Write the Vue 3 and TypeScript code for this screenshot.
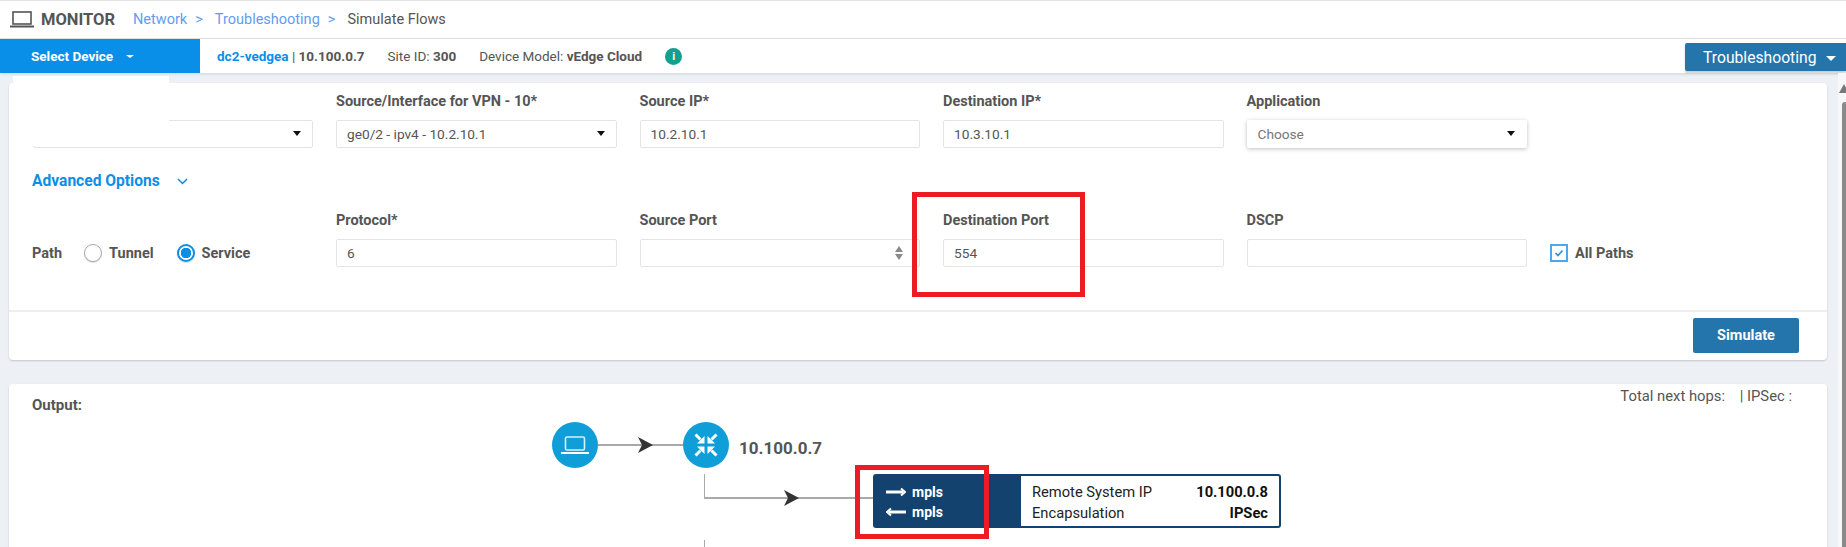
<script setup lang="ts">
const crumbs = ['Network', 'Troubleshooting']
</script>

<template>
  <div class="page">
    <header class="topbar">
      <svg class="monitor-icon" viewBox="0 0 24 17" aria-hidden="true">
        <rect x="3" y="1" width="18" height="12" fill="none" stroke="#555" stroke-width="1.6" />
        <path d="M0 15.5h24" stroke="#555" stroke-width="2" />
      </svg>
      <span class="monitor">MONITOR</span>
      <template v-for="c in crumbs" :key="c">
        <a class="crumb">{{ c }}</a>
        <span class="crumb sep">&gt;</span>
      </template>
      <span class="crumb-last">Simulate Flows</span>
    </header>

    <div class="subbar">
      <div class="select-device">Select Device <i class="caret small" /></div>
      <div class="device-info">
        <span><b class="blue">dc2-vedgea</b> | <b>10.100.0.7</b></span>
        <span>Site ID: <b>300</b></span>
        <span>Device Model: <b>vEdge Cloud</b></span>
        <span class="info-dot">i</span>
      </div>
      <button class="tool-btn">Troubleshooting <i class="caret" /></button>
    </div>

    <main class="content">
      <section class="card form-card">
        <div class="patch" />
        <div class="row first-row">
          <div class="field">
            <label>&nbsp;</label>
            <div class="input"><i class="arrow" /></div>
          </div>
          <div class="field">
            <label>Source/Interface for VPN - 10*</label>
            <div class="input">ge0/2 - ipv4 - 10.2.10.1<i class="arrow" /></div>
          </div>
          <div class="field">
            <label>Source IP*</label>
            <div class="input">10.2.10.1</div>
          </div>
          <div class="field">
            <label>Destination IP*</label>
            <div class="input">10.3.10.1</div>
          </div>
          <div class="field">
            <label>Application</label>
            <div class="input raised muted">Choose<i class="arrow" /></div>
          </div>
        </div>

        <div class="advanced">
          Advanced Options
          <svg width="11" height="7" viewBox="0 0 11 7" aria-hidden="true">
            <path d="M1 1l4.5 4.5L10 1" fill="none" stroke="#0a8fe8" stroke-width="1.5" />
          </svg>
        </div>

        <div class="row second-row">
          <div class="path-group">
            <span class="opt-label">Path</span>
            <span class="radio" />
            <span class="opt-label tunnel">Tunnel</span>
            <span class="radio on" />
            <span class="opt-label">Service</span>
          </div>
          <div class="field">
            <label>Protocol*</label>
            <div class="input">6</div>
          </div>
          <div class="field">
            <label>Source Port</label>
            <div class="input">
              <svg class="spinner" width="8" height="14" viewBox="0 0 8 14" aria-hidden="true">
                <path d="M4 0l4 6H0zM4 14L0 8h8z" fill="#8a8a8a" />
              </svg>
            </div>
          </div>
          <div class="field">
            <label>Destination Port</label>
            <div class="input">554</div>
          </div>
          <div class="field">
            <label>DSCP</label>
            <div class="input" />
          </div>
          <div class="all-paths">
            <span class="check">
              <svg width="10" height="8" viewBox="0 0 10 8" aria-hidden="true">
                <path d="M1.5 4L4 6.5 8.5 1.5" fill="none" stroke="#2b8fdc" stroke-width="1.7" />
              </svg>
            </span>
            <span class="opt-label">All Paths</span>
          </div>
        </div>

        <div class="card-foot">
          <button class="simulate">Simulate</button>
        </div>
      </section>

      <section class="card output-card">
        <div class="output-head">
          <span class="output-title">Output:</span>
          <span class="hops">Total next hops: &nbsp; &nbsp;| IPSec :</span>
        </div>

        <div class="node node-a">
          <svg width="28" height="19" viewBox="0 0 28 19" aria-hidden="true">
            <rect x="4.5" y="1" width="19" height="13" rx="1.5" fill="none" stroke="#d6f1fc" stroke-width="1.6" />
            <path d="M0 17h28" stroke="#fff" stroke-width="2" />
          </svg>
        </div>
        <div class="wire wire-a" />
        <svg class="head head-a" width="15" height="16" viewBox="0 0 15 16" aria-hidden="true">
          <path d="M0 0l15 8L0 16l4-8z" fill="#333" />
        </svg>
        <div class="node node-b">
          <svg width="24" height="24" viewBox="0 0 24 24" aria-hidden="true">
            <path d="M1.5 1.5l5 5M22.5 1.5l-5 5M1.5 22.5l5-5M22.5 22.5l-5-5" stroke="#fff" stroke-width="3" fill="none" />
            <path d="M10.5 10.5V3L3 10.5zM13.5 10.5V3l7.5 7.5zM10.5 13.5V21L3 13.5zM13.5 13.5V21l7.5-7.5z" fill="#fff" />
          </svg>
        </div>
        <span class="node-label">10.100.0.7</span>
        <div class="wire wire-down" />
        <div class="wire wire-b" />
        <svg class="head head-b" width="15" height="16" viewBox="0 0 15 16" aria-hidden="true">
          <path d="M0 0l15 8L0 16l4-8z" fill="#333" />
        </svg>
        <div class="wire wire-tail" />

        <div class="tunnel-box">
          <div class="tunnel-dark">
            <div class="mpls">
              <svg width="20" height="10" viewBox="0 0 20 10" aria-hidden="true">
                <path d="M0 5h17" stroke="#fff" stroke-width="3" />
                <path d="M15 1.5L19 5l-4 3.5" fill="none" stroke="#fff" stroke-width="2" />
              </svg>
              mpls
            </div>
            <div class="mpls">
              <svg width="20" height="10" viewBox="0 0 20 10" aria-hidden="true">
                <path d="M20 5H3" stroke="#fff" stroke-width="3" />
                <path d="M5 1.5L1 5l4 3.5" fill="none" stroke="#fff" stroke-width="2" />
              </svg>
              mpls
            </div>
          </div>
          <div class="tunnel-info">
            <div class="kv"><span>Remote System IP</span><b>10.100.0.8</b></div>
            <div class="kv"><span>Encapsulation</span><b>IPSec</b></div>
          </div>
        </div>
      </section>
    </main>

    <div class="scrollbar"><i class="scroll-up" /><i class="scroll-thumb" /></div>

    <div class="mark mark-port" />
    <div class="mark mark-mpls" />
  </div>
</template>

<style>
html, body {
  margin: 0;
  overflow: hidden;
}
</style>

<style scoped>
.page {
  position: relative;
  width: 1846px;
  height: 547px;
  overflow: hidden;
  background: #edf0f5;
  font-family: Roboto, "Liberation Sans", sans-serif;
  font-size: 14.5px;
  color: #555;
}
b { font-weight: 700; }

.topbar {
  display: flex;
  align-items: center;
  height: 37px;
  padding-left: 10px;
  background: #fff;
  border-top: 1px solid #e3e3e3;
  border-bottom: 1px solid #e3e3e3;
  box-sizing: content-box;
}
.monitor-icon { width: 24px; height: 17px; margin-right: 7px; }
.monitor { font-size: 16.5px; font-weight: 700; color: #555; margin-right: 18px; }
.crumb { color: #5f9df2; margin-right: 8px; }
.crumb.sep { margin-right: 12px; }
.crumb-last { color: #555; }

.subbar {
  display: flex;
  align-items: stretch;
  height: 34px;
  background: #fff;
  box-shadow: 0 1px 3px rgba(0, 0, 0, 0.12);
  position: relative;
}
.select-device {
  display: flex;
  align-items: center;
  width: 169px;
  padding-left: 31px;
  background: #0a8fe8;
  color: #fff;
  font-size: 13.5px;
  font-weight: 700;
}
.caret {
  display: inline-block;
  margin-left: 6px;
  border-left: 5px solid transparent;
  border-right: 5px solid transparent;
  border-top: 5px solid currentColor;
  vertical-align: middle;
}
.caret.small { margin-left: 13px; border-left-width: 4px; border-right-width: 4px; border-top-width: 3px; }
.device-info {
  display: flex;
  align-items: center;
  flex: 1;
  gap: 23px;
  padding-left: 17px;
  font-size: 13.5px;
}
.blue { color: #0a8fe8; }
.info-dot {
  display: flex;
  align-items: center;
  justify-content: center;
  width: 17px;
  height: 17px;
  border-radius: 50%;
  background: #12a08f;
  color: #fff;
  font-size: 11px;
  font-weight: 700;
}
.tool-btn {
  align-self: flex-start;
  width: 161px;
  height: 28px;
  margin-top: 4px;
  border: 0;
  border-radius: 2px 0 0 2px;
  background: #2575ad;
  color: #fff;
  font-family: inherit;
  font-size: 15.7px;
  text-align: left;
  padding: 0 0 0 18px;
  box-shadow: 0 2px 2px rgba(0, 0, 0, 0.2);
}

.content {
  display: flex;
  flex-direction: column;
  gap: 24px;
  width: 1818px;
  margin: 10px 0 0 9px;
}
.card {
  position: relative;
  background: #fff;
  border-radius: 4px;
  box-shadow: 0 1px 2px rgba(0, 0, 0, 0.18);
}
.form-card {
  height: 277px;
  display: flex;
  flex-direction: column;
}
.patch {
  position: absolute;
  top: -7px;
  left: 4px;
  width: 156px;
  height: 70px;
  background: #fff;
  z-index: 1;
}
.row {
  display: grid;
  grid-template-columns: repeat(5, 280.5px);
  column-gap: 23px;
  padding-left: 23.5px;
}
.first-row { padding-top: 10px; }
.field label {
  display: block;
  height: 18px;
  line-height: 18px;
  font-weight: 700;
  margin-bottom: 9px;
}
.input {
  position: relative;
  box-sizing: border-box;
  height: 28px;
  line-height: 26px;
  padding-left: 10px;
  border: 1px solid #e4e4e4;
  border-radius: 2px;
  font-size: 13.7px;
  color: #555;
  background: #fff;
}
.input.raised {
  border-color: transparent;
  box-shadow: 0 1px 4px rgba(0, 0, 0, 0.25);
}
.input.muted { color: #777; }
.arrow {
  position: absolute;
  right: 11px;
  top: 10px;
  border-left: 4.5px solid transparent;
  border-right: 4.5px solid transparent;
  border-top: 5px solid #111;
}
.advanced {
  display: flex;
  align-items: center;
  gap: 17px;
  margin: 24px 0 0 23px;
  height: 18px;
  color: #0a8fe8;
  font-size: 15.6px;
  font-weight: 700;
}
.second-row {
  position: relative;
  margin-top: 22px;
  padding-left: 23px;
}
.second-row .field { position: relative; left: 0.5px; }
.path-group {
  display: flex;
  align-items: center;
  align-self: end;
  height: 28px;
}
.opt-label { font-weight: 700; }
.radio {
  box-sizing: border-box;
  width: 18px;
  height: 18px;
  margin: 0 7px 0 22px;
  border: 1px solid #aaa;
  border-radius: 50%;
  background: #fff;
  box-shadow: 0 1px 1px rgba(0, 0, 0, 0.15);
}
.radio.on {
  margin-left: 0;
  border: 2px solid #0a8fe8;
  background: radial-gradient(circle, #0a8fe8 0 5px, #fff 5.5px);
}
.tunnel { margin-right: 23px; }
.spinner { position: absolute; right: 16px; top: 6px; }
.all-paths {
  position: absolute;
  left: 1541px;
  bottom: 5px;
  display: flex;
  align-items: center;
  gap: 7px;
}
.check {
  box-sizing: border-box;
  display: flex;
  align-items: center;
  justify-content: center;
  width: 18px;
  height: 18px;
  border: 2px solid #4aa8f0;
  background: #fff;
}
.card-foot {
  margin-top: auto;
  height: 50px;
  box-sizing: border-box;
  border-top: 2px solid #eee;
  display: flex;
  justify-content: flex-end;
  padding: 6px 28px 0 0;
}
.simulate {
  width: 106px;
  height: 35px;
  border: 0;
  border-radius: 2px;
  background: #2575ad;
  color: #fff;
  font-family: inherit;
  font-size: 14.5px;
  font-weight: 700;
}

.output-card {
  height: 220px;
}
.output-head {
  display: flex;
  justify-content: space-between;
  padding: 3px 35px 0 23px;
}
.output-title { font-size: 15px; font-weight: 700; margin-top: 9px; }
.hops { font-size: 14.8px; }

.node {
  position: absolute;
  display: flex;
  align-items: center;
  justify-content: center;
  width: 46px;
  height: 46px;
  border-radius: 50%;
  background: #0f9ed8;
}
.node-a { left: 543px; top: 38px; }
.node-b { left: 674px; top: 38px; }
.node-label {
  position: absolute;
  left: 730px;
  top: 54px;
  font-size: 17px;
  font-weight: 700;
  line-height: 20px;
}
.wire { position: absolute; background: #a9a9a9; }
.wire-a { left: 589px; top: 60px; width: 85px; height: 2px; }
.wire-down { left: 695px; top: 90px; width: 1px; height: 25px; }
.wire-b { left: 695px; top: 113px; width: 169px; height: 2px; }
.wire-tail { left: 695px; top: 156px; width: 1px; height: 10px; }
.head { position: absolute; }
.head-a { left: 629px; top: 53px; }
.head-b { left: 775px; top: 106px; }

.tunnel-box {
  position: absolute;
  left: 864px;
  top: 90px;
  display: flex;
  box-sizing: border-box;
  width: 408px;
  height: 54px;
  border: 2px solid #14426f;
  border-radius: 3px;
  background: #fff;
}
.tunnel-dark {
  display: flex;
  flex-direction: column;
  justify-content: center;
  gap: 4px;
  width: 146px;
  padding: 2px 0 0 11px;
  box-sizing: border-box;
  background: #14426f;
}
.mpls {
  display: flex;
  align-items: center;
  gap: 6px;
  color: #fff;
  font-size: 14px;
  font-weight: 700;
  line-height: 16px;
}
.tunnel-info {
  flex: 1;
  display: flex;
  flex-direction: column;
  justify-content: center;
  gap: 3px;
  padding: 2px 11px 0;
  color: #222;
  font-size: 14.7px;
}
.kv {
  display: flex;
  justify-content: space-between;
  line-height: 18px;
}
.kv b { color: #111; }

.scrollbar {
  position: absolute;
  left: 1838px;
  top: 73px;
  bottom: 0;
  width: 8px;
  background: #f6f7f8;
}
.scroll-up {
  position: absolute;
  top: 11px;
  right: -3px;
  border-left: 5px solid transparent;
  border-right: 5px solid transparent;
  border-bottom: 9px solid #777;
}
.scroll-thumb {
  position: absolute;
  top: 29px;
  left: 4px;
  right: 0;
  bottom: 0;
  border-radius: 3px 0 0 0;
  background: #8a8a8a;
}

.mark {
  position: absolute;
  box-sizing: border-box;
  border: 5px solid #ed1c24;
  pointer-events: none;
}
.mark-port { left: 912px; top: 192px; width: 173px; height: 105px; }
.mark-mpls { left: 855px; top: 465px; width: 134px; height: 74px; }
</style>
